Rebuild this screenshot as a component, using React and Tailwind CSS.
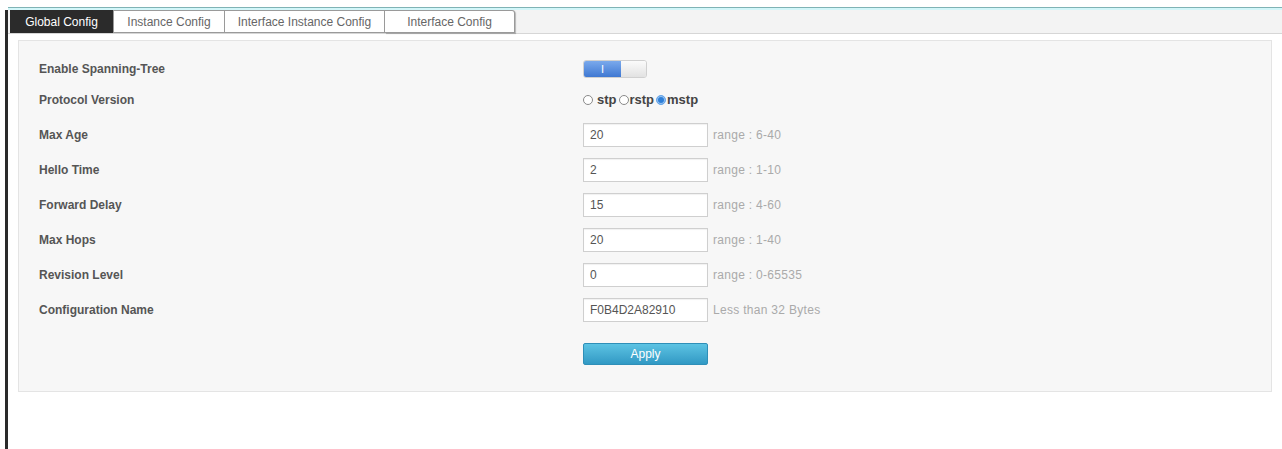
import React from "react";

function Radio({ label, checked, first }) {
  return (
    <label className="flex items-center">
      {checked ? (
        <span className="w-[10px] h-[10px] rounded-full bg-[#2f7fd8] border border-[#6aa8ea] shadow-[inset_0_0_0_1px_#9cc6f2]" />
      ) : (
        <span className="w-[10px] h-[10px] rounded-full bg-white border border-[#8a8a8a]" />
      )}
      <span className={`${first ? "ml-[4px]" : "ml-[1px]"} font-bold text-[#444] text-[13px]`}>{label}</span>
    </label>
  );
}

function Field({ label, value, hint }) {
  return (
    <div className="flex items-center h-[24px]">
      <div className="w-[544px] text-[#555] font-bold">{label}</div>
      <div className="w-[125px] h-[24px] bg-white border border-[#cfcfcf] shadow-[inset_0_1px_1px_rgba(0,0,0,0.06)] flex items-center pl-[6px] text-[#555]">
        {value}
      </div>
      <div className="ml-[5px] text-[#aaa] tracking-[0.3px]">{hint}</div>
    </div>
  );
}

export default function App() {
  const tabs = [
    { name: "Instance Config", w: "w-[112px]" },
    { name: "Interface Instance Config", w: "w-[160px]" },
    { name: "Interface Config", w: "w-[130px]" },
  ];
  return (
    <div className="w-[1282px] h-[449px] bg-white overflow-hidden font-['Liberation_Sans',Arial,sans-serif] text-[12px]">
      <div className="pt-[7px] pl-[8px]">
        <div className="h-[1px] bg-[#7fb3b5]" />
        <div className="h-[2px] bg-[#d2f6f9]" />
      </div>
      <div className="ml-[5px] border-l-[3px] border-[#2a2a2a] h-[439px]">
        <div className="h-[24px] bg-[#f3f3f3] border-b border-[#d6d6d6] flex pl-[2px]">
          <div className="w-[103px] h-[23px] bg-[#2b2b2b] text-white flex items-center justify-center">
            Global Config
          </div>
          {tabs.map((t, i) => (
            <div
              key={t.name}
              className={`${t.w} h-[23px] bg-white border border-[#9a9a9a] ${i > 0 ? "border-l-0" : ""} ${i === tabs.length - 1 ? "rounded-tr-[3px] shadow-[1px_1px_1px_rgba(0,0,0,0.25)]" : ""} text-[#666] flex items-center justify-center`}
            >
              {t.name}
            </div>
          ))}
        </div>
        <div className="mt-[6px] ml-[10px] mr-[10px] h-[352px] bg-[#f7f7f7] border border-[#e4e4e4] pl-[20px]">
          <div className="mt-[19px] h-[18px] flex items-center">
            <div className="w-[544px] text-[#555] font-bold">Enable Spanning-Tree</div>
            <div className="w-[64px] h-[18px] rounded-[3px] flex overflow-hidden border border-[#d0d0d0]">
              <div className="w-[37px] bg-gradient-to-b from-[#7aa9ec] to-[#3f78d2] text-white flex items-center justify-center text-[11px]">
                I
              </div>
              <div className="flex-1 bg-gradient-to-b from-[#fbfbfb] to-[#e2e2e2]" />
            </div>
          </div>
          <div className="mt-[13px] h-[18px] flex items-center">
            <div className="w-[544px] text-[#555] font-bold">Protocol Version</div>
            <div className="flex items-center gap-[2px]">
              <Radio label="stp" first />
              <Radio label="rstp" />
              <Radio label="mstp" checked />
            </div>
          </div>
          <div className="mt-[14px] flex flex-col gap-[11px]">
            <Field label="Max Age" value="20" hint="range : 6-40" />
            <Field label="Hello Time" value="2" hint="range : 1-10" />
            <Field label="Forward Delay" value="15" hint="range : 4-60" />
            <Field label="Max Hops" value="20" hint="range : 1-40" />
            <Field label="Revision Level" value="0" hint="range : 0-65535" />
            <Field label="Configuration Name" value="F0B4D2A82910" hint="Less than 32 Bytes" />
          </div>
          <div className="mt-[21px] flex">
            <div className="w-[544px]" />
            <button className="w-[125px] h-[22px] rounded-[2px] bg-gradient-to-b from-[#5cc3e3] to-[#3199c4] border border-[#2f8fb8] text-white text-[12px]">
              Apply
            </button>
          </div>
        </div>
      </div>
    </div>
  );
}
